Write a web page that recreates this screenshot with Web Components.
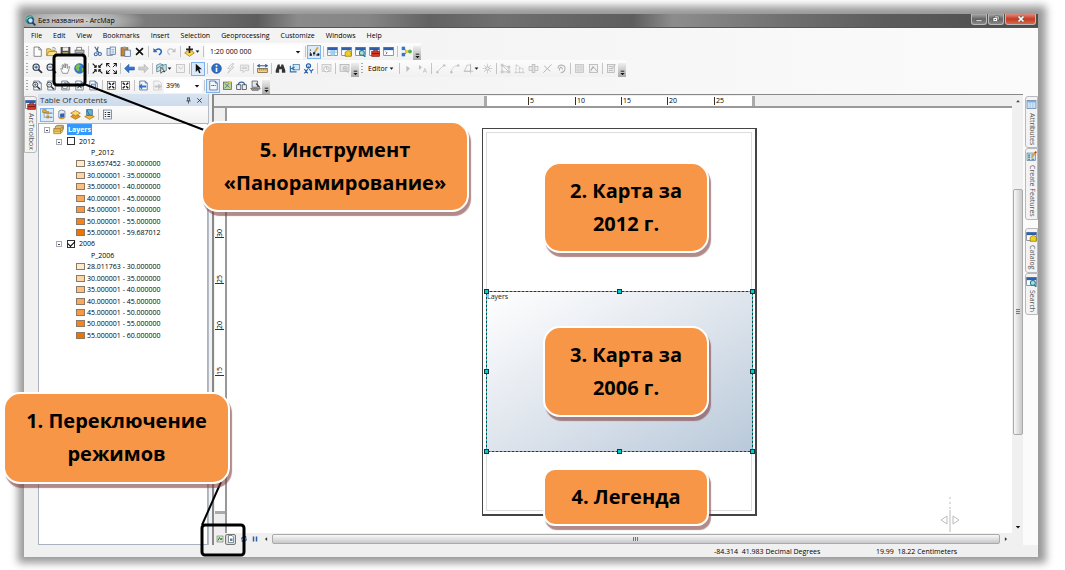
<!DOCTYPE html>
<html lang="ru">
<head>
<meta charset="utf-8">
<title>Без названия - ArcMap</title>
<style>
html, body { margin: 0; background: #fff; }
body { font: 7px/10px "Open Sans", "Noto Sans", sans-serif; color: #000; }
</style>
</head>
<body>
<map-lesson></map-lesson>
<script>
const define = (tag, css, html, extra) => customElements.define(tag, class extends HTMLElement {
  connectedCallback() {
    if (this.shadowRoot) return;
    const root = this.attachShadow({ mode: 'open' });
    const body = typeof html === 'function' ? html(this) : html;
    root.innerHTML = '<style>*{box-sizing:border-box}:host{display:block;box-sizing:border-box}' + css + '</style>' + body;
    if (extra) extra(this, root);
  }
});

const win = c => `<rect x="1" y="2" width="14" height="12" fill="#fff" stroke="#5b6b80"/><rect x="1" y="2" width="14" height="4" fill="#2c5fae"/>`;
const mag = '<circle cx="6" cy="6" r="4.5" fill="#e8f1fa" stroke="#333" stroke-width="1.6"/><path d="M9.5 9.5l5 5" stroke="#333" stroke-width="2.6"/>';
const sheet = '<path d="M2.5 1.5h8l3 3v10h-11z" fill="#f4f8ff" stroke="#3f5a80"/><path d="M10.500 1.500v3h3" fill="none" stroke="#3f5a80"/>';
const ICONS = {
  arcmap: '<circle cx="7" cy="7" r="6.500" fill="#2f9a8c"/><path d="M2 5q4-4 8-2l-3 4-4 1z" fill="#cde7b4"/><circle cx="8" cy="8" r="4" fill="#bfe6f5" stroke="#12406b" stroke-width="1.600"/><path d="M11 11l4 4" stroke="#12406b" stroke-width="2.600"/>',
  doc: '<path d="M3 1.500h7l3.500 3.500v10H3z" fill="#fff" stroke="#555"/><path d="M10 1.500v4h3.500" fill="none" stroke="#555"/>',
  open: '<path d="M1 14V4h5l1 2h6v3" fill="#f6d160" stroke="#9b7417"/><path d="M1 14l3-6h12l-3 6z" fill="#fbe28a" stroke="#9b7417"/><path d="M9 3q4-2 5 2" stroke="#2b61b5" fill="none"/>',
  save: '<rect x="1.500" y="2" width="13" height="12" fill="#54504a" stroke="#333"/><rect x="4" y="2" width="8" height="5" fill="#eee"/><rect x="4" y="9" width="8" height="5" fill="#cbb56a"/>',
  print: '<path d="M4 6V2h7v4" fill="#fff" stroke="#555"/><rect x="1.500" y="6" width="13" height="6" fill="#b9b9b9" stroke="#555"/><rect x="4" y="10" width="8" height="4" fill="#fff" stroke="#555"/>',
  cut: '<path d="M4 1l6 9M9 1L7 9" stroke="#48607f" stroke-width="1.600"/><circle cx="5.500" cy="12" r="2.200" fill="none" stroke="#3468b0" stroke-width="1.500"/><circle cx="11.500" cy="11.500" r="2.200" fill="none" stroke="#3468b0" stroke-width="1.500"/>',
  copy: '<rect x="1.500" y="3.500" width="8" height="10" fill="#dce9f8" stroke="#4b678c"/><rect x="6" y="1.500" width="8" height="11" fill="#eef5ff" stroke="#4b678c"/><path d="M8 5h4M8 7.500h4M8 10h4" stroke="#6b92c4"/>',
  paste: '<rect x="1.500" y="2.500" width="10" height="12" fill="#c78234" stroke="#7d4c15"/><rect x="4" y="1" width="5" height="3" fill="#999"/><rect x="7" y="6" width="8" height="9" fill="#e8f1ff" stroke="#4b678c"/>',
  del: '<path d="M3 3l10 10M13 3L3 13" stroke="#111" stroke-width="2.400"/>',
  undo: '<path d="M2 3v6h6z" fill="#2c68bb"/><path d="M4 7q5-5 9-1 2 4-3 7" fill="none" stroke="#2c68bb" stroke-width="2.200"/>',
  redo: '<path d="M14 3v6H8z" fill="#c4c4c4"/><path d="M12 7Q7 2 3 6q-2 4 3 7" fill="none" stroke="#c4c4c4" stroke-width="1.600"/>',
  add: '<path d="M8 5l7 5-7 5-7-5z" fill="#fbd64b" stroke="#9b7110"/><path d="M8 0v10M3 5h10" stroke="#222" stroke-width="2.400"/>',
  sketch: '<path d="M2 5v8h12V9" fill="none" stroke="#333" stroke-width="1.500" stroke-dasharray="2 2"/><path d="M8 9l5-7" stroke="#d9a33a" stroke-width="2.600"/><path d="M1 11h3v3H1zM12 11h3v3h-3zM6 9h3v3H6z" fill="#111"/>',
  table: win() + '<path d="M1 9h14M6 6v8M11 6v8" stroke="#6d9dd8"/><rect x="6" y="6" width="5" height="8" fill="#9fd0f2"/>',
  catalog: win() + '<path d="M6 9l5-3 4 3v6H6z" fill="#f0cf21" stroke="#8a7400"/>',
  search: win() + '<circle cx="10" cy="10" r="3.600" fill="#aee0ce" stroke="#257a9c" stroke-width="1.500"/><path d="M12 13l3 3" stroke="#257a9c" stroke-width="2"/>',
  toolbox: win() + '<rect x="4" y="8" width="11" height="7" fill="#d73b2c" stroke="#8b1a10"/><path d="M7 8V6h5v2M4 11h11" stroke="#7d160d" fill="none" stroke-width="1.400"/>',
  python: win() + '<path d="M4 8l2 2-2 2" fill="none" stroke="#333"/>',
  model: '<path d="M4 4l5 4-5 5M8 8h4" stroke="#4a4a4a" fill="none" stroke-width="1.400"/><rect x="1" y="1" width="5" height="5" fill="#3676cf"/><rect x="1" y="10" width="5" height="5" fill="#3676cf"/><circle cx="8" cy="8" r="2.400" fill="#f0c52e"/><circle cx="13" cy="8" r="2.800" fill="#4fb04a"/>',
  zoomin: mag + '<path d="M6 3.500v5M3.500 6h5" stroke="#2767b8" stroke-width="1.500"/>',
  zoomout: mag + '<path d="M3.500 6h5" stroke="#2767b8" stroke-width="1.500"/>',
  pan: '<path d="M4 15Q2 11 1 8q1-1 3 1L3 3q1-1 2 0l1 4V1.500q1-1 2 0V7l1-5q1-1 2 0l-.5 6L13 5q1 0 1 1l-2 6-1 3z" fill="#fff" stroke="#777" stroke-width="1.100"/>',
  globe: '<circle cx="8" cy="8" r="7" fill="#2f7bd0" stroke="#1b4f92"/><path d="M4 2q5-1 6 2l-3 3 1 4-3 1-3-5z" fill="#7fc04c"/><path d="M11 7l4 1-3 5z" fill="#7fc04c"/>',
  shrink: '<path d="M1 1l5 5M15 1l-5 5M1 15l5-5M15 15l-5-5" stroke="#111" stroke-width="1.500"/><path d="M6 3v3H3M10 3v3h3M6 13v-3H3M10 13v-3h3" fill="none" stroke="#111" stroke-width="1.500"/>',
  grow: '<path d="M2 2l4 4M14 2l-4 4M2 14l4-4M14 14l-4-4" stroke="#111" stroke-width="1.300"/><path d="M1 5V1h4M11 1h4v4M1 11v4h4M15 11v4h-4" fill="none" stroke="#111" stroke-width="1.700"/>',
  left: '<path d="M1 8l6-6v4h8v4H7v4z" fill="#2f74d0" stroke="#1c509b"/>',
  right: '<path d="M15 8L9 2v4H1v4h8v4z" fill="#d0d0d0" stroke="#adadad"/>',
  select: '<path d="M1 3l5-2 5 2 4-1v9l-5 2-4-2-5 2z" fill="#c2e5e6" stroke="#476c85"/><path d="M1 8l9-6v11" fill="none" stroke="#476c85"/><path d="M7 6v9l3-3 3 1z" fill="#fff" stroke="#222"/>',
  clear: '<rect x="2" y="2" width="12" height="12" fill="#f2f2f2" stroke="#b5b5b5"/><path d="M5 5l3 4 4-4" fill="none" stroke="#b5b5b5"/>',
  cursor: '<path d="M4 1v12l3-3 2 5 2-1-2-5h4z" fill="#111"/>',
  info: '<circle cx="8" cy="8" r="7" fill="#2d6fc9" stroke="#174a8d"/><path d="M8 7v6" stroke="#fff" stroke-width="2.400"/><circle cx="8" cy="4" r="1.400" fill="#fff"/>',
  bolt: '<path d="M10 1L4 8h4l-4 7 9-9H9l4-5z" fill="#f0f0f0" stroke="#bdbdbd"/>',
  note: '<path d="M2 3h12v8H9l-3 3v-3H2z" fill="#f0f0f0" stroke="#bdbdbd"/><path d="M4 6h8M4 8h8" stroke="#bdbdbd"/>',
  measure: '<path d="M1 4h14M4 2L1 4l3 2M12 2l3 2-3 2" stroke="#245ca8" stroke-width="1.500" fill="none"/><rect x="1" y="8" width="14" height="6" fill="#f4d28a" stroke="#6b522a"/><path d="M4 8v3M7 8v3M10 8v3M13 8v3" stroke="#6b522a"/>',
  find: '<path d="M4 2h3v3h2V2h3l3 9v3h-5V9H6v5H1v-3z" fill="#333"/>',
  route: '<rect x="6" y="2" width="9" height="8" fill="#d7eafa" stroke="#2f70a8"/><path d="M2 4v9h9M8 6l-4 2 4 2" fill="none" stroke="#2f70a8" stroke-width="1.700"/>',
  xy: '<circle cx="8" cy="4" r="3" fill="#bfe0f5" stroke="#245ca8" stroke-width="1.600"/><path d="M8 5v3M2 9l5 6M7 9l-5 6M9 9l3 3 3-3M12 12v3" fill="none" stroke="#245ca8" stroke-width="1.500"/>',
  time: '<rect x="1.500" y="2" width="13" height="10" fill="#eee" stroke="#bbb"/><circle cx="8" cy="9" r="4" fill="#f8f8f8" stroke="#aaa"/><path d="M8 6v3h2" fill="none" stroke="#aaa"/>',
  viewer: '<rect x="1.500" y="2" width="13" height="10" fill="#e7e7e7" stroke="#aaa"/><circle cx="9" cy="8" r="3" fill="#f8f8f8" stroke="#aaa"/><path d="M9 6v4M7 8h4M11 11l3 4" stroke="#aaa"/>',
  g1: '<path d="M5 4v9l5-5z" fill="#bbb"/>',
  g2: '<path d="M3 3v7l4-4z" fill="#bbb"/><path d="M9 14l2.500-6L14 14M10 12h3" fill="none" stroke="#bbb"/>',
  g3: '<path d="M3 13L13 3" stroke="#bbb"/><path d="M2 12h3v3H2zM12 2h3v3h-3z" fill="#bbb"/>',
  g4: '<path d="M3 13Q5 4 13 4" fill="none" stroke="#bbb" stroke-dasharray="4 1"/><path d="M2 12h3v3H2zM12 2h3v3h-3z" fill="#bbb"/>',
  g5: '<path d="M2 12h9V3H6l-4 9M1 12h14M11 1v14" fill="none" stroke="#b5b5b5"/>',
  g6: '<path d="M8 1v14M1 8h14M3 3l10 10M13 3L3 13" stroke="#c0c0c0"/><circle cx="8" cy="8" r="2.500" fill="#eee" stroke="#aaa"/>',
  g7: '<path d="M3 3v10h10V6zM3 3l10 10" fill="none" stroke="#b5b5b5"/><path d="M1 1h4v4H1zM1 11h4v4H1zM11 11h4v4h-4zM11 4h4v4h-4z" fill="#c9c9c9"/>',
  g8: '<path d="M3 14V2l5 4v8M8 7l5 1v6M1 14h14" fill="none" stroke="#b5b5b5" stroke-dasharray="3 1"/>',
  g9: '<rect x="1.500" y="5" width="13" height="6" fill="#eee" stroke="#b5b5b5"/><rect x="6" y="2" width="4" height="12" fill="#e2e2e2" stroke="#b5b5b5"/>',
  g10: '<path d="M2 14L14 2M3 4l9 8" stroke="#b5b5b5" stroke-width="1.400"/>',
  g11: '<path d="M3 8q0-5 5-5 6 1 5 6-1 5-6 5M10 9L7 6q-3 2-2 5" fill="none" stroke="#b0b0b0" stroke-width="1.500"/>',
  g12: '<rect x="2" y="2" width="12" height="12" fill="#e4e4e4" stroke="#bbb"/><path d="M6 2v12M10 2v12M2 6h12M2 10h12" stroke="#cdcdcd"/>',
  g13: '<rect x="2" y="2" width="12" height="12" fill="#f2f2f2" stroke="#aaa"/><path d="M4 12l3-7 3 3 3 4M4 10l5-4" fill="none" stroke="#999"/>',
  g14: '<rect x="2" y="2" width="10" height="12" fill="#eee" stroke="#aaa"/><path d="M4 5h6M4 8h6M4 11h6M8 9l6-7" stroke="#aaa"/>',
  pzin: sheet + '<g transform="translate(0 2) scale(.8)">' + mag + '<path d="M6 3.500v5M3.500 6h5" stroke="#333"/></g>',
  pzout: sheet + '<g transform="translate(0 2) scale(.8)">' + mag + '<path d="M3.500 6h5" stroke="#333"/></g>',
  ppan: sheet + '<path d="M4 12L3 7h2l1 2V4h2v4l1-3 2 1-1 7z" fill="#fff" stroke="#555"/>',
  pfull: sheet + '<path d="M5 5l6 7M11 5l-6 7" stroke="#444" stroke-width="1.500"/>',
  p100: sheet + '<rect x="5" y="6" width="6" height="5" fill="#c6dcf5" stroke="#3f5a80"/>',
  pshrink: '<rect x="2" y="2" width="12" height="12" fill="#fff" stroke="#555"/><path d="M4 4l3 3M12 4L9 7M4 12l3-3M12 12L9 9" stroke="#111" stroke-width="2"/>',
  pback: sheet + '<path d="M1 9l5-4v3h6v3H6v3z" fill="#2f74d0"/>',
  pnext: '<path d="M2.500 1.500h8l3 3v10h-11z" fill="#f4f4f4" stroke="#c4c4c4"/><path d="M14 9L9 5v3H4v3h5v3z" fill="#c4c4c4"/>',
  draft: sheet + '<path d="M5 8h6" stroke="#333" stroke-width="1.600" stroke-dasharray="1.500 1"/>',
  focus: '<rect x="2" y="3" width="12" height="11" fill="#bad79c" stroke="#4e5c46"/><path d="M4 5l7 6M11 4l-7 8" stroke="#405a85"/><path d="M9 2l5 1-3 4z" fill="#e9c33a"/>',
  layout: '<path d="M3 9q0-6 5-6t5 6" fill="none" stroke="#35689f" stroke-width="2"/><rect x="1" y="7" width="6" height="7" fill="#e8f1ff" stroke="#333"/><rect x="9" y="7" width="6" height="7" fill="#e8f1ff" stroke="#333"/>',
  driven: '<path d="M3 1.500h8v9H3z" fill="#dce8f2" stroke="#444"/><path d="M1 12h14l-3 3H3z" fill="#999" stroke="#555"/><path d="M9 5l5 6" stroke="#444" stroke-width="2"/>',
  tree: '<path d="M3 3v9h4M3 6h4" fill="none" stroke="#888"/><path d="M1 1l5 0v4H1zM7 4h3v3H7zM7 10h3v3H7z" fill="#f0b93a" stroke="#9b7110"/><path d="M11 6h4M11 12h4" stroke="#376bb0" stroke-width="1.400"/>',
  source: '<path d="M4 3q4-3 9 0v9q-4 4-9 0z" fill="#e8edf5" stroke="#5d6f88"/><path d="M6 7l6-1v6l-6 1z" fill="#2c63b5"/><path d="M4 12q4 4 9 0" stroke="#d79a27" stroke-width="2" fill="none"/>',
  visible: '<path d="M8 7l7 4-7 4-7-4z" fill="#e7962d" stroke="#9b6710"/><path d="M8 2l7 4-7 4-7-4z" fill="#fbd86a" stroke="#9b7110"/>',
  bysel: '<path d="M8 8l7 3-7 4-7-4z" fill="#f0b93a" stroke="#9b7110"/><rect x="4" y="1" width="8" height="8" fill="#5eb8d0" stroke="#274d89"/><path d="M4 1l4 8" stroke="#274d89"/>',
  options: '<rect x="2" y="1.500" width="12" height="13" fill="#f5f9ff" stroke="#4c6687"/><path d="M4 5h2M8 5h4M4 8h2M8 8h4M4 11h2M8 11h4" stroke="#333" stroke-width="1.500"/>',
  layers: '<path d="M1 7l4-3h9l-3 3zM1 7h10v7H1zM11 7l3-3v7l-3 3" fill="#f2cd68" stroke="#a27a26"/><path d="M3 4l3-2h9v6" fill="none" stroke="#a27a26" stroke-width="1.400"/><path d="M1 10.500h10l4-3" stroke="#a27a26" fill="none"/>',
  attrs: '<rect x="1.500" y="2" width="13" height="12" fill="#cfe6fa" stroke="#54789f"/><path d="M2 4h12" stroke="#7daad9" stroke-width="2"/><path d="M6 5v9M10 5v9" stroke="#8db9e2"/>',
  create: '<rect x="1.500" y="3" width="12" height="11" fill="#d7e9f9" stroke="#54789f"/><path d="M3 6h3M3 9h3M3 12h3M8 6h3M8 12h4" stroke="#3a8060" stroke-width="1.800"/><path d="M8 10l6-8" stroke="#dca640" stroke-width="2.600"/><path d="M13 3l2-2" stroke="#c33" stroke-width="2.400"/>',
  data: '<rect x="2" y="2" width="12" height="12" fill="#d8ead0" stroke="#555"/><path d="M4 11l3-6 3 5 2-4" fill="none" stroke="#2f7a43" stroke-width="2"/>',
  page: '<path d="M3 1h7l3 3v11H3z" fill="#fff" stroke="#333"/><path d="M6 7h5v5H6z" fill="#4b84c2"/>',
  refresh: '<path d="M3 9q0-5 5-5h2M13 7q0 6-6 5" fill="none" stroke="#2c68bb" stroke-width="2.200"/><path d="M9 1l5 3-5 3zM7 9l-5 3 5 3z" fill="#2c68bb"/>',
  pause: '<path d="M5 3v10M11 3v10" stroke="#2a5da8" stroke-width="3"/>',
  caret: '<path d="M2 5h12l-6 7z" fill="#111"/>',
  up: '<path d="M3 11h10L8 5z" fill="#444"/>',
  aleft: '<path d="M11 3v10L5 8z" fill="#333"/>',
  aright: '<path d="M5 3v10l6-5z" fill="#333"/>',
  pin: '<path d="M5 2h6M6 2v7M10 2v7M3 9h10M8 9v6" stroke="#223" stroke-width="1.600"/>',
  x: '<path d="M3 3l10 10M13 3L3 13" stroke="#223" stroke-width="1.800"/>',
  more: '<path d="M4 5h8" stroke="#111" stroke-width="2"/><path d="M3 9h10l-5 5z" fill="#111"/>',
  min: '<path d="M2 10h12v3H2z" fill="#fff" stroke="#444"/>',
  restore: '<path d="M5 2h9v8H5z" fill="#ddd" stroke="#333"/><rect x="2" y="5" width="9" height="8" fill="#fff" stroke="#333"/><rect x="5" y="8" width="3" height="2" fill="#555"/>',
  close: '<path d="M3 3l10 10M13 3L3 13" stroke="#555" stroke-width="5"/><path d="M3 3l10 10M13 3L3 13" stroke="#fff" stroke-width="3.500"/>'
};

define('ui-icon', ':host{width:11px;height:11px;flex:none}svg{display:block;width:100%;height:100%}',
  el => `<svg viewBox="0 0 16 16" fill="none" aria-hidden="true">${ICONS[el.getAttribute('name')]}</svg>`);

define('tool-button', `
:host{flex:none}
button{display:flex;align-items:center;justify-content:center;width:14px;height:14px;padding:0;border:1px solid transparent;background:none;font:inherit}
:host([pressed]) button{border-color:#7db2ee;background:#dcebfb}
:host([menu]) button{width:19px}
ui-icon+ui-icon{width:5px;height:5px}
`, el => `<button aria-label="${el.getAttribute('icon')}"><ui-icon name="${el.getAttribute('icon')}"></ui-icon>${el.hasAttribute('menu') ? '<ui-icon name="caret"></ui-icon>' : ''}</button>`);

define('tool-select', `
:host{position:relative;background:#fff;height:14px;flex:none}
select{appearance:none;width:100%;height:14px;padding:0 0 0 var(--inset,2px);border:0;background:none;font:inherit;line-height:14px;color:#000}
ui-icon{position:absolute;right:2px;top:4px;width:6px;height:6px;pointer-events:none}
`, el => `<select aria-label="${el.getAttribute('label')}"><option>${el.getAttribute('value')}</option></select><ui-icon name="caret"></ui-icon>`);

define('tool-strip', `
:host{display:flex;align-items:center;height:17px;background:linear-gradient(#fcfcfc,#f1f1f1)}
.grip{width:2px;height:11px;margin:0 2px;background:repeating-linear-gradient(#aaa 0 1px,transparent 1px 3px);flex:none}
:host([plain]) .grip{width:0;margin:0 1px}
.more{width:8px;height:14px;margin-top:3px;padding:0 0 1px;border:0;display:flex;align-items:flex-end;justify-content:center;background:linear-gradient(#eee,#aaa)}
.more ui-icon{width:7px;height:7px}
i{width:4px;height:11px;background:linear-gradient(#c4c4c4,#c4c4c4) 2px 0/1px 100% no-repeat;flex:none}
.editor{width:32px;padding:0 0 0 3px;border:0;background:none;font:inherit;color:#000;display:flex;align-items:center;gap:1px}
.editor ui-icon{width:5px;height:5px}
.wide{width:98px;--inset:5px}.narrow{width:38px}
`, el => '<span class="grip"></span>' + el.getAttribute('items').split(' ').map(n =>
  n === '|' ? '<i></i>'
  : n === 'scale' ? '<tool-select class="wide" label="Map scale" value="1:20 000 000"></tool-select>'
  : n === 'percent' ? '<tool-select class="narrow" label="Page zoom" value="39%"></tool-select>'
  : n === 'editor' ? '<button class="editor">Editor<ui-icon name="caret"></ui-icon></button>'
  : `<tool-button icon="${n.replace(/[*+]/, '')}" ${n.includes('*') ? 'pressed' : ''} ${n.includes('+') ? 'menu' : ''}></tool-button>`
).join('') + (el.hasAttribute('plain') ? '' : '<button class="more" aria-label="Toolbar options"><ui-icon name="more"></ui-icon></button>'));

define('title-bar', `
:host{display:flex;align-items:center;height:14px;padding-left:1px;border-bottom:1px solid #555;
background:radial-gradient(ellipse 70px 16px at 52px 7px,#d5d5d5,#c4c4c4aa 60%,#c4c4c400),linear-gradient(95deg,#8c8c8c,#777 15%,#5c5c5c 23%,#8b8b8b 27%,#858585 34%,#626262 40%,#707070 47%,#5d5d5d 60%,#8d8d8d 64%,#707070 75%,#5c5c5c 85%,#4c4c4c)}
h1{flex:1;margin:0 0 0 2px;font:inherit;color:#000}
div{display:flex;align-self:flex-start;gap:1px;padding-right:2px}
button{width:16px;height:11px;padding:0;border:1px solid #bbb;border-top:0;border-radius:0 0 3px 3px;background:linear-gradient(#aaa,#666 50%,#888);display:flex;align-items:center;justify-content:center}
button ui-icon{width:8px;height:8px}
.close{width:31px;background:linear-gradient(#e08c7c,#c53a22 50%,#d8684a)}
`, `<ui-icon name="arcmap"></ui-icon><h1>Без названия - ArcMap</h1><div><button aria-label="Minimize"><ui-icon name="min"></ui-icon></button><button aria-label="Restore"><ui-icon name="restore"></ui-icon></button><button class="close" aria-label="Close"><ui-icon name="close"></ui-icon></button></div>`);

define('menu-bar', `
:host{display:flex;height:15px;align-items:center;gap:11px;padding-left:7px}
button{padding:0;border:0;background:none;font:inherit;color:#000}
`, ['File', 'Edit', 'View', 'Bookmarks', 'Insert', 'Selection', 'Geoprocessing', 'Customize', 'Windows', 'Help'].map(t => `<button>${t}</button>`).join(''));

define('dock-tab', `
button{display:flex;flex-direction:column;align-items:center;gap:3px;width:13px;padding:2px 0;border:1px solid #b9b9b9;border-radius:3px 0 0 3px;background:#f3f3f3;color:#555;font:7px/10px "Open Sans",sans-serif}
:host([left]) button{border-radius:0 3px 3px 0}
span{writing-mode:vertical-rl}
`, el => `<button><ui-icon name="${el.getAttribute('icon')}"></ui-icon><span><slot></slot></span></button>`);

const COLORS = ['#fdebcf', '#fdd6a5', '#fdbf80', '#fba85c', '#fb973c', '#f98118', '#f07200'];
const group = (name, on, ranges) => `
<li class="group"><ui-expander></ui-expander><label><input type="checkbox" ${on ? 'checked' : ''}>${name}</label></li>
<li class="field">P_${name}</li>` + ranges.map((r, i) => `<li class="entry"><i style="background:${COLORS[i]}"></i>${r}</li>`).join('');
const MID = ['30.000001 - 35.000000', '35.000001 - 40.000000', '40.000001 - 45.000000', '45.000001 - 50.000000', '50.000001 - 55.000000'];

define('ui-expander', ':host{width:6px;height:6px;border:1px solid #a9a9b4;background:linear-gradient(#446,#446) 1px 2px/2px 1px no-repeat #fff;flex:none;margin-top:1px}', '');

define('contents-panel', `
:host{display:flex;flex-direction:column;width:171px;border-right:1px solid #b5bcc6}
header{display:flex;align-items:center;height:12px;padding:0 1px 0 2px;background:linear-gradient(#d7e3f1,#cddbea);font-size:8px;color:#333}
h2{flex:1;margin:0;font:inherit}
header button{padding:0;border:0;background:none;width:11px}
header ui-icon{width:7px;height:7px}
ul{list-style:none;margin:0;padding:0;display:grid;grid-template-rows:repeat(19,1fr);height:217px}
.tree{flex:1;border:1px solid #aab2c0;background:#fff}
li{display:flex;align-items:center;min-height:0;line-height:11px;white-space:nowrap}
.root{padding-left:5px;gap:3px}
.root b{background:#3399ff;color:#fff;line-height:11px;padding:0 1px}
.group{padding-left:17px;gap:5px}
label{display:flex;align-items:center;gap:4px}
input{appearance:none;width:8px;height:8px;margin:0;border:1px solid #333;background:#fff}
input:checked::before{content:"";display:block;width:6px;height:3px;border:solid #000;border-width:0 0 1px 1px;transform:rotate(-45deg)}
.field{padding-left:52px}
.entry{padding-left:37px;gap:2px}
.entry i{width:9px;height:7px;border:1px solid #8c7a68}
`, `<header><h2>Table Of Contents</h2><button aria-label="Pin"><ui-icon name="pin"></ui-icon></button><button aria-label="Close"><ui-icon name="x"></ui-icon></button></header>
<tool-strip plain items="tree* source visible bysel | options"></tool-strip>
<div class="tree"><ul class="rows"><li class="root"><ui-expander></ui-expander><ui-icon name="layers"></ui-icon><b>Layers</b></li>
${group('2012', false, ['33.657452 - 30.000000', ...MID, '55.000001 - 59.687012'])}
${group('2006', true, ['28.011763 - 30.000000', ...MID, '55.000001 - 60.000000'])}</ul></div>`);

const HT = [[5, 43], [10, 90], [15, 136], [20, 182], [25, 229]];
const VT = [[30, 109], [25, 155], [20, 201], [15, 247], [10, 293], [5, 339]];
define('page-ruler', `
:host{background:#efefef;position:relative;font-size:7px;color:#000}
:host([vertical]){width:13px;border-right:2px solid #999}
:host(:not([vertical])){height:13px;border-bottom:2px solid #999}
div{position:absolute;background:#fff}
:host(:not([vertical])) div{left:270px;top:1px;width:271px;height:10px;border:solid #aaa;border-width:0 3px}
:host([vertical]) div{top:20px;left:1px;height:386px;width:10px;border-bottom:3px solid #aaa}
span{position:absolute;white-space:nowrap}
:host(:not([vertical])) span{top:1px;padding-left:1px;border-left:1px solid #333;height:8px;line-height:8px}
:host([vertical]) span{left:0;width:9px;height:12px;border-bottom:1px solid #333;writing-mode:vertical-rl;line-height:9px}
:host([vertical]) b{font-weight:400;display:block;transform:rotate(180deg)}
`, el => '<div>' + (el.hasAttribute('vertical') ? VT.map(([n, p]) => `<span style="top:${p - 11}px"><b>${n}</b></span>`) : HT.map(([n, p]) => `<span style="left:${p - 2}px">${n}</span>`)).join('') + '</div>');

define('data-frame', `
:host{position:absolute;left:3px;right:3px;top:162px;height:160px;background:linear-gradient(150deg,#fff,#dfe5ed 50%,#b9c9da)}
svg{position:absolute;inset:0;width:100%;height:100%;overflow:visible}
span{position:absolute;left:1px;top:1px;color:#222}
`, () => '<span>Layers</span><svg shape-rendering="crispEdges"><rect width="100%" height="100%" fill="none" stroke="#23c4c4"/><rect width="100%" height="100%" fill="none" stroke="#333" stroke-dasharray="2 2"/>' +
  [[0, 0], [50, 0], [100, 0], [0, 50], [100, 50], [0, 100], [50, 100], [100, 100]].map(([x, y]) => `<svg x="${x}%" y="${y}%" overflow="visible"><rect x="-2" y="-2" width="4" height="4" fill="#0cc" stroke="#134"/></svg>`).join('') + '</svg>');

define('layout-canvas', `
:host{position:relative;flex:1;min-height:424px;background:#fff}
.sheet{position:absolute;left:255px;top:20px;width:275px;height:388px;border:1px solid #444;border-right-width:2px;border-bottom-width:2px;background:#fff}
.margin{position:absolute;inset:3px;border:1px solid #ddd}
.split{position:absolute;right:52px;bottom:1px;width:20px;height:36px}
`, `<div class="sheet"><div class="margin"></div><data-frame></data-frame></div>
<svg class="split" viewBox="0 0 20 36" fill="none" stroke="#bbb"><path d="M10 1v13" stroke-dasharray="2 3"/><path d="M10 14v22M7 20L1 24l6 4zM13 20l6 4-6 4z"/></svg>`);

define('scroll-column', `
:host{width:11px;display:flex;flex-direction:column;align-items:center;background:#f0f0f0;padding:3px 0}
ui-icon{width:6px;height:6px}
.gap{flex:86}
.thumb{width:10px;flex:246;border:1px solid #aaa;border-radius:2px;background:linear-gradient(90deg,#f8f8f8,#c8c8cc);display:flex;align-items:center;justify-content:center}
.thumb i{width:4px;height:6px;background:repeating-linear-gradient(#777 0 1px,#ddd 1px 2px)}
.end{flex:90}
`, '<ui-icon name="up"></ui-icon><span class="gap"></span><span class="thumb"><i></i></span><span class="end"></span><ui-icon name="caret"></ui-icon>');

define('scroll-row', `
:host{height:12px;display:flex;align-items:center;background:#f0f0f0;padding-right:11px}
button{width:11px;height:11px;padding:0;border:0;background:none;display:flex;align-items:center;justify-content:center}
button.on{border:1px solid #777;border-radius:2px;background:#ddd;margin-right:2px}
ui-icon{width:8px;height:8px}
.arrow{width:6px;height:6px;margin:0 3px}
.thumb{height:10px;flex:1;border:1px solid #aaa;border-radius:2px;background:linear-gradient(#f8f8f8,#c8c8cc);display:flex;align-items:center;justify-content:center}
.thumb i{width:6px;height:4px;background:repeating-linear-gradient(90deg,#777 0 1px,#ddd 1px 2px)}
`, '<button aria-label="Data view"><ui-icon name="data"></ui-icon></button><button class="on" aria-label="Layout view"><ui-icon name="page"></ui-icon></button><button aria-label="Refresh"><ui-icon name="refresh"></ui-icon></button><button aria-label="Pause"><ui-icon name="pause"></ui-icon></button><ui-icon class="arrow" name="aleft"></ui-icon><span class="thumb"><i></i></span><ui-icon class="arrow" name="aright"></ui-icon>');

define('map-view', `
:host{flex:1;min-width:0;margin-left:3px;display:flex;flex-direction:column;border-left:2px solid #888;border-top:1px solid #888}
.main{flex:1;display:flex}
.inner{flex:1;display:flex;flex-direction:column;min-width:0}
.body{flex:1;display:flex}
`, `<div class="main"><div class="inner"><page-ruler></page-ruler><div class="body"><page-ruler vertical></page-ruler><layout-canvas></layout-canvas></div></div><scroll-column></scroll-column></div><scroll-row></scroll-row>`);

define('status-bar', `
:host{display:flex;justify-content:flex-end;height:12px;line-height:13px;background:#f0f0f0;white-space:pre}
span{width:162px}
`, '<span>-84.314  41.983 Decimal Degrees</span><span>19.99  18.22 Centimeters</span>');

define('app-window', `
:host{display:flex;flex-direction:column;min-height:543px;background:linear-gradient(90deg,#f0f0f0,#fbfbfb);box-shadow:1px -1px 8px 7px #999}
.row{display:flex}
.work{flex:1;display:flex}
.left{width:14px;padding-top:2px}
.right{width:15px;padding:2px 0 0 2px}
.break{margin-top:8px}
`, `<title-bar></title-bar><menu-bar></menu-bar>
<div class="row"><tool-strip items="doc open save print | cut copy paste del | undo redo | add+ | scale | sketch* | table catalog search toolbox python | model"></tool-strip></div>
<div class="row"><tool-strip items="zoomin zoomout pan globe | shrink grow | left right | select+ clear | cursor* | info bolt note | measure | find route xy | time | viewer"></tool-strip><tool-strip items="editor | g1 g2 | g3 g4 g5+ g6 | g7 g8 g9 g10 g11 | g12 g13 | g14"></tool-strip></div>
<div class="row"><tool-strip items="pzin pzout ppan pfull p100 | pshrink pshrink | pback pnext percent | draft* focus layout driven"></tool-strip></div>
<div class="work"><div class="left"><dock-tab left icon="toolbox">ArcToolbox</dock-tab></div><contents-panel></contents-panel><map-view></map-view>
<div class="right"><dock-tab icon="attrs">Attributes</dock-tab><dock-tab icon="create">Create Features</dock-tab><dock-tab class="break" icon="catalog">Catalog</dock-tab><dock-tab icon="search">Search</dock-tab></div></div>
<status-bar></status-bar>`);

define('note-callout', `
:host{position:absolute;display:flex;align-items:center;justify-content:center;padding-bottom:2px;text-align:center;background:#f79646;border:2px solid #fff;border-radius:17px;box-shadow:2px 4px 1px #7d3c3c99;color:#000;font:700 20px/33px "Open Sans","Noto Sans",sans-serif;white-space:nowrap}
`, '<slot></slot>');

define('map-lesson', `
:host{position:relative;padding:14px 27px 13px 24px;min-height:100vh;overflow:hidden}
svg{position:absolute;left:0;top:0;width:270px;height:570px;pointer-events:none}
.pan{left:201px;top:121px;width:268px;height:91px}
.c2012,.c2006,.legend{left:543px;width:166px;height:91px}
.c2012{top:162px}.c2006{top:326px}
.legend{top:468px;height:58px;border-radius:12px}
.mode{left:3px;top:392px;width:227px;height:92px}
`, `<app-window></app-window>
<svg viewBox="0 0 270 570" fill="none" stroke="#000" stroke-width="3"><rect x="54" y="55" width="31" height="30" rx="3"/><path d="M84 84L204 130M221 482L202 525" stroke-width="2"/><rect x="202" y="525" width="42" height="30" rx="3"/></svg>
<note-callout class="mode">1. Переключение<br>режимов</note-callout>
<note-callout class="c2012">2. Карта за<br>2012 г.</note-callout>
<note-callout class="c2006">3. Карта за<br>2006 г.</note-callout>
<note-callout class="legend">4. Легенда</note-callout>
<note-callout class="pan">5. Инструмент<br>«Панорамирование»</note-callout>`);
</script>
</body>
</html>
